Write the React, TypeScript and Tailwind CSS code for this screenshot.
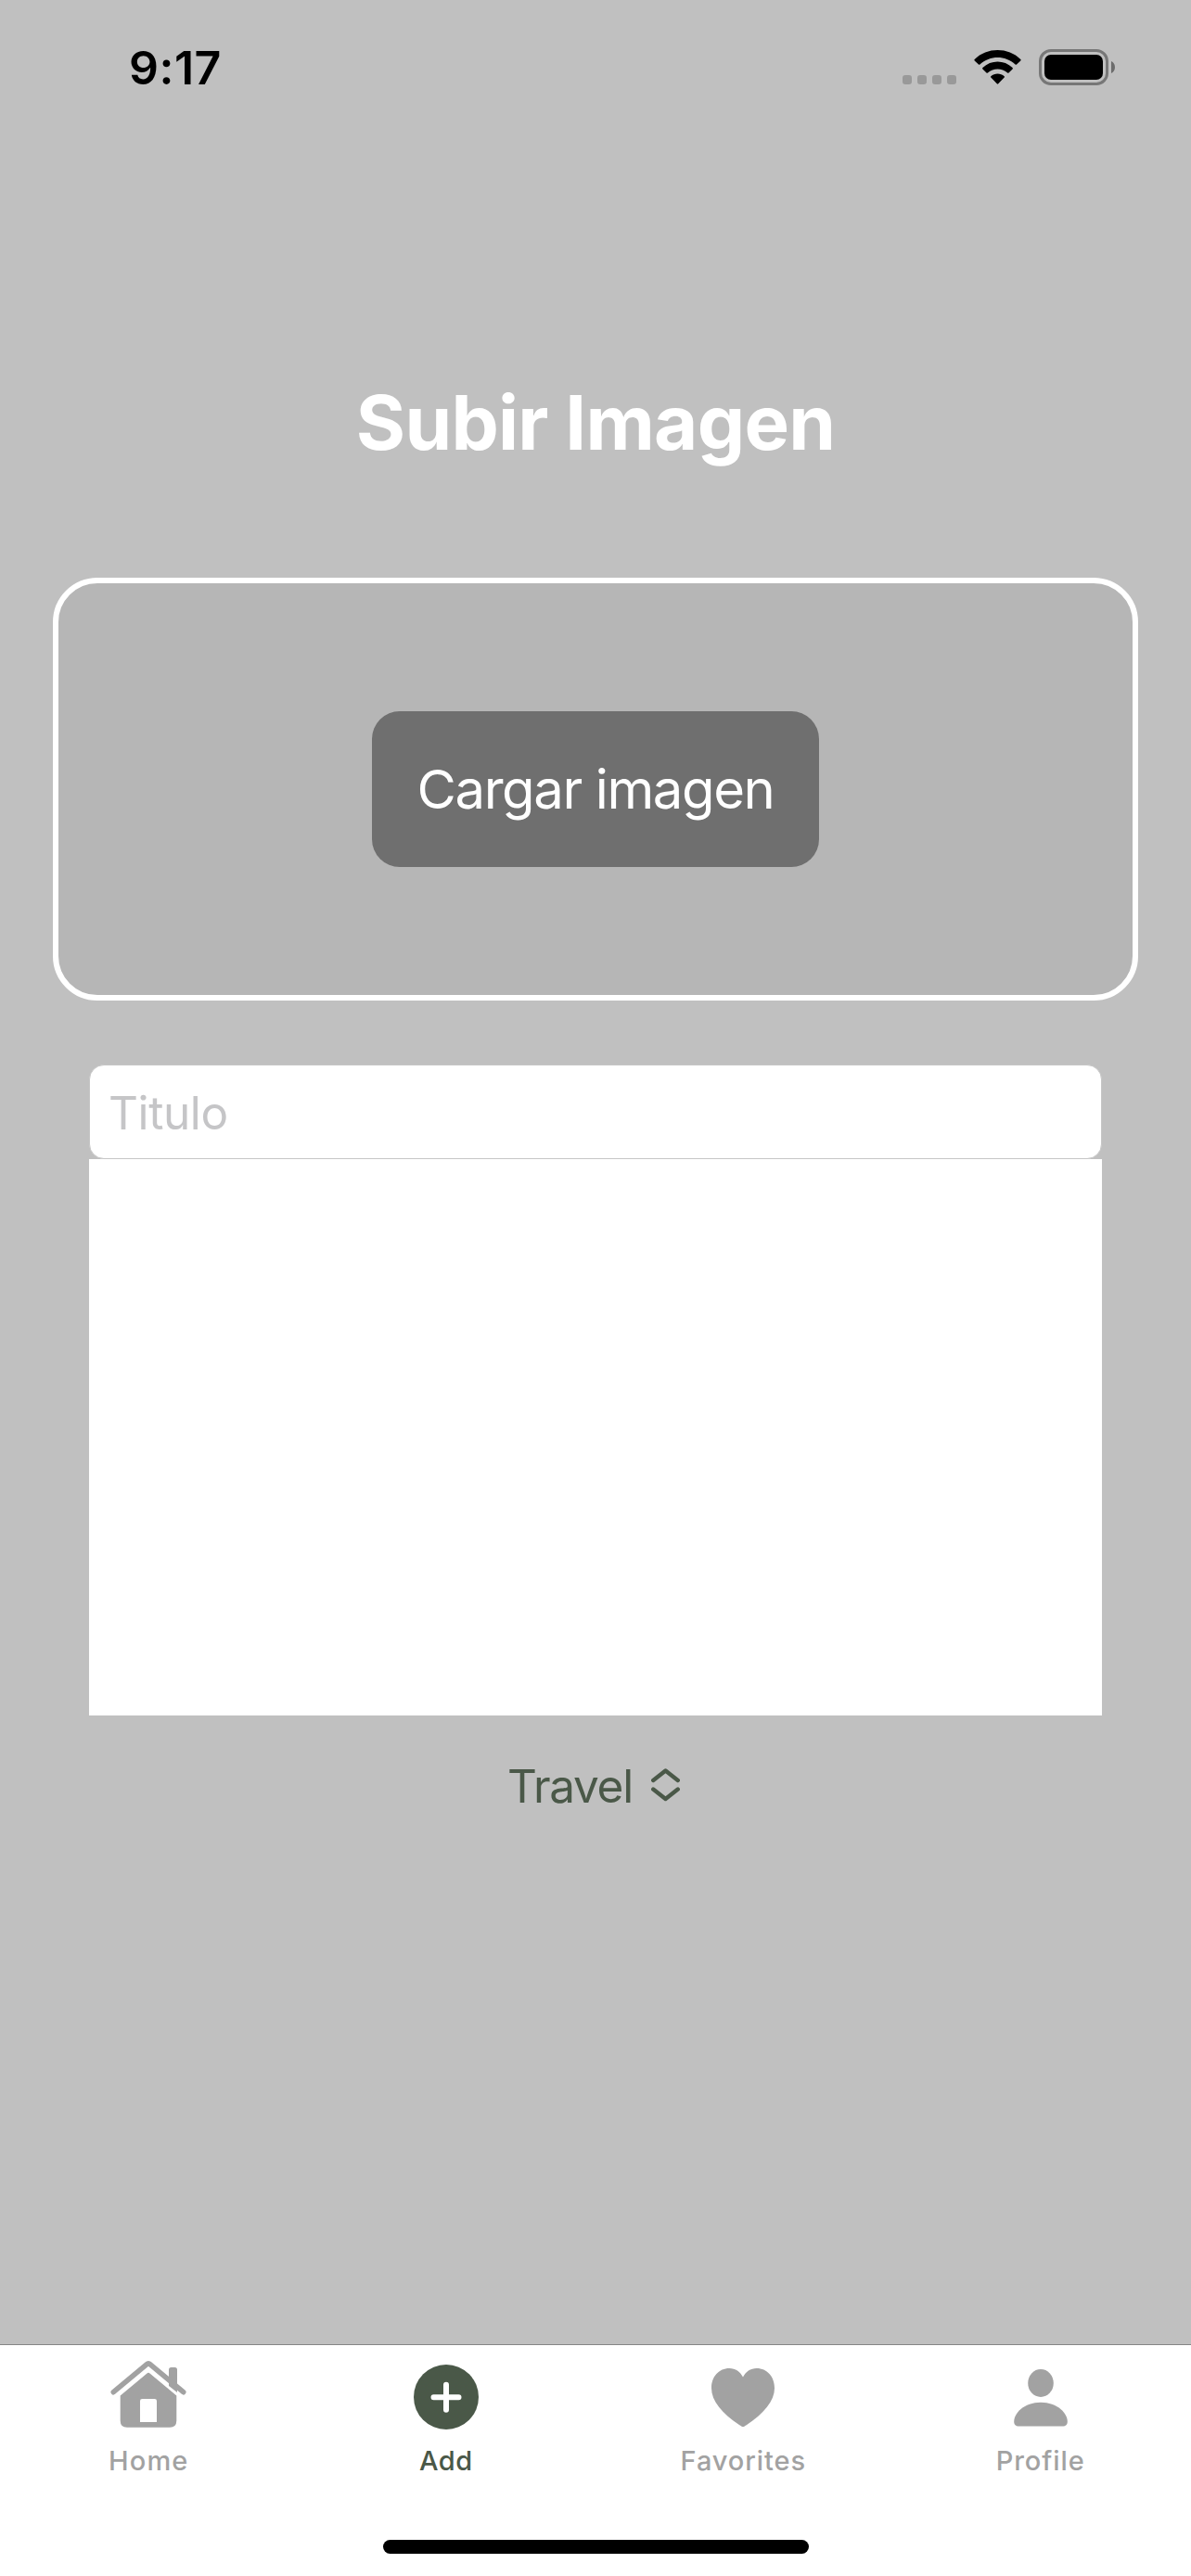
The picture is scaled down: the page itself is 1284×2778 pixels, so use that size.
import React from "react";

function StatusBar() {
  return (
    <header className="flex h-[141px] items-start justify-between pl-[139px] pr-[82px]">
      <span className="pt-[43px] text-[50px] font-semibold leading-[60px] tracking-[0.5px] text-black">9:17</span>
      <div className="flex items-start pt-[53px]">
        <div className="flex gap-[6px] pt-[28px]">
          {[0, 1, 2, 3].map((i) => (
            <i key={i} className="size-[10px] rounded-[3px] bg-[#999999]" />
          ))}
        </div>
        <svg className="ml-[19px] mt-[1px] h-[37px] w-[51px]" viewBox="0 0 51 37">
          <path d="M.7 10C14-3.3 37-3.3 50.3 10q.7.7 0 1.400L46 15.500q-.7.7-1.400 0C34 5.500 17 5.500 6.400 15.500q-.7.7-1.400 0L.7 11.400Q0 10.700.7 10Z" />
          <path d="M9.400 19C18.500 10.400 32.500 10.400 41.600 19q.7.7 0 1.400l-4.100 4.100q-.7.700-1.400 0C30 19 21 19 14.900 24.500q-.7.700-1.400 0L9.400 20.400Q8.700 19.700 9.400 19Z" />
          <path d="M18.300 28.200C22.300 24.700 28.700 24.700 32.700 28.200q.7.700 0 1.400L26.200 36.300q-.7.700-1.400 0L18.300 29.600Q17.600 28.900 18.300 28.200Z" />
        </svg>
        <div className="ml-[19px] h-[39px] w-[75px] rounded-[13px] border-[3px] border-[#777777] p-[3px]">
          <div className="h-full rounded-[7px] bg-black" />
        </div>
        <svg className="ml-[3px] mt-[13px] h-[13px] w-[4px]" viewBox="0 0 4 13">
          <path fill="#6c6c6c" d="M0 0C2.400 1 4 3.500 4 6.500S2.400 12 0 13Z" />
        </svg>
      </div>
    </header>
  );
}

const HomeIcon = () => (
  <svg className="h-[72px] w-[82px]" viewBox="0 0 82 72" fill="currentColor">
    <path d="M63 27V9.500Q63 7 65.500 7H69.500Q72 7 72 9.500V34Z" />
    <path fill="none" stroke="currentColor" strokeWidth="5.600" strokeLinecap="round" strokeLinejoin="round" d="M3.300 33.700 39 3.900Q41 2 43 3.900L78.700 33.700" />
    <path fillRule="evenodd" d="M39.500 13.500Q41 12.200 42.500 13.500L71.300 37.500V64.500Q71.300 71.700 64 71.700H18Q10.700 71.700 10.700 64.500V37.500ZM34.300 41Q32 41 32 43.300V66H50V43.300Q50 41 47.700 41Z" />
  </svg>
);

const AddIcon = () => (
  <svg className="size-[70px]" viewBox="0 0 70 70">
    <circle cx="35" cy="35" r="35" fill="currentColor" />
    <path stroke="white" strokeWidth="6" strokeLinecap="round" d="M35 21.700V48.700M21.500 35.200H48.500" />
  </svg>
);

const HeartIcon = () => (
  <svg className="h-[63px] w-[68px]" viewBox="0 0 68 63" fill="currentColor">
    <path d="M34 63C33 63 31.500 62 30.300 61.200C11.500 48.800 0 35 0 21.400C0 8.800 8.300 0 19.200 0C26 0 31 3.700 34 9.500C37 3.700 42 0 48.800 0C59.700 0 68 8.800 68 21.400C68 35 56.500 48.800 37.700 61.200C36.500 62 35 63 34 63Z" />
  </svg>
);

const ProfileIcon = () => (
  <svg className="h-[62px] w-[58px]" viewBox="0 0 58 62" fill="currentColor">
    <ellipse cx="29" cy="15" rx="13.800" ry="15" />
    <path d="M5.500 61.500C2 61.500 .2 60 .2 56.500C.2 47.500 11 35.700 29 35.700S57.800 47.500 57.800 56.500C57.800 60 56 61.500 52.500 61.500Z" />
  </svg>
);

const tabs = [
  { label: "Home", Icon: HomeIcon, color: "text-[#a2a2a2]", pad: "pt-[17px]", gap: "tracking-[1.2px]" },
  { label: "Add", Icon: AddIcon, color: "text-[#4a5848]", pad: "pt-[21px]", gap: "tracking-[0.5px]" },
  { label: "Favorites", Icon: HeartIcon, color: "text-[#a2a2a2]", pad: "pt-[25px]", gap: "tracking-[0.9px]" },
  { label: "Profile", Icon: ProfileIcon, color: "text-[#a2a2a2]", pad: "pt-[26px]", gap: "tracking-[0.95px]" },
];

export default function App() {
  return (
    <div className="flex h-[2778px] w-[1284px] flex-col bg-[#c0c0c0] font-['Inter',sans-serif]">
      <StatusBar />
      <main className="flex flex-1 flex-col items-center">
        <h1 className="mt-[265px] h-[100px] whitespace-nowrap text-[81.500px] font-bold leading-[100px] tracking-[-0.75px] text-white">Subir Imagen</h1>
        <section className="mt-[117px] flex h-[456px] w-[1170px] items-center justify-center rounded-[48px] border-[6px] border-white bg-[#b6b6b6]">
          <button className="h-[168px] w-[482px] whitespace-nowrap rounded-[30px] bg-[#6f6f6f] text-[58px] leading-[72px] tracking-[-1.4px] text-white">Cargar imagen</button>
        </section>
        <div className="mt-[69px] h-[102px] w-[1092px] bg-[#c0c0c0]">
          <div className="flex h-[102px] items-center rounded-[16px] border border-[#c6c6c6] bg-white pl-[20px] pt-[1px] text-[49.500px] leading-[60px] tracking-[-0.4px] text-[#c5c5c7]">Titulo</div>
        </div>
        <div className="h-[600px] w-[1092px] bg-white" />
        <button className="mr-[4px] mt-[46px] flex h-[60px] items-center gap-[20px] text-[49.500px] leading-[60px] tracking-[-1.3px] text-[#4a5848]">
          <span>Travel</span>
          <svg className="mb-[2px] h-[36px] w-[31px]" viewBox="0 0 31 36" fill="none" stroke="currentColor" strokeWidth="4.400" strokeLinecap="round" strokeLinejoin="round">
            <path d="M2.200 13 15.500 2.500 28.800 13M2.200 22.500 15.500 33 28.800 22.500" />
          </svg>
        </button>
      </main>
      <nav className="flex h-[250px] flex-col items-center border-t border-[#858585] bg-white">
        <div className="grid h-[210px] w-full grid-cols-4 pr-[2px]">
          {tabs.map(({ label, Icon, color, pad, gap }) => (
            <div key={label} className={"flex flex-col items-center " + color}>
              <div className={"h-[107px] " + pad}>
                <Icon />
              </div>
              <span className={"text-[29px] font-medium leading-[36px] " + gap}>{label}</span>
            </div>
          ))}
        </div>
        <div className="h-[15px] w-[459px] rounded-full bg-black" />
      </nav>
    </div>
  );
}
